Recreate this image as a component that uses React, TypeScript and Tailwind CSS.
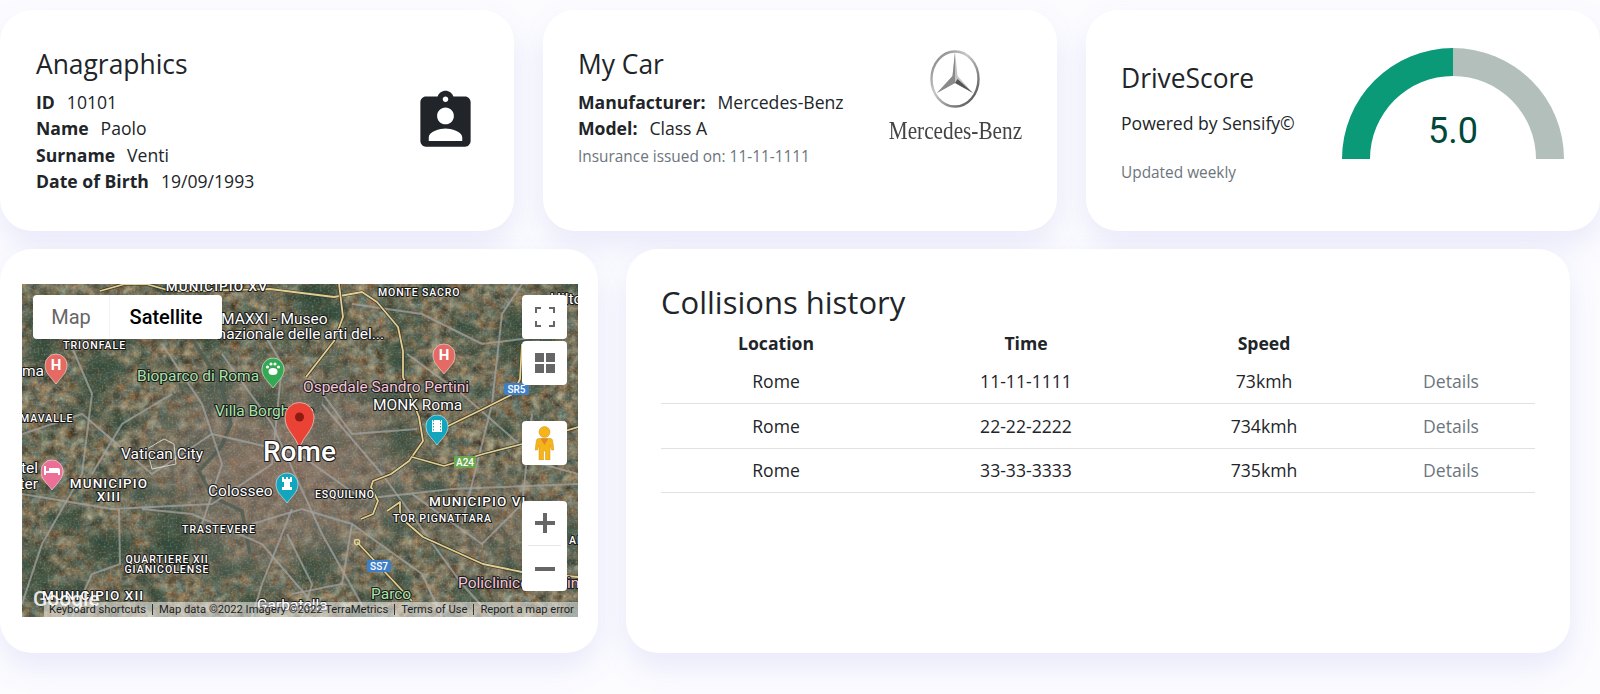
const LABEL_FONT = "Roboto, 'Liberation Sans', sans-serif";

const ROWS = [
  { location: 'Rome', time: '11-11-1111', speed: '73kmh' },
  { location: 'Rome', time: '22-22-2222', speed: '734kmh' },
  { location: 'Rome', time: '33-33-3333', speed: '735kmh' },
];

const YELLOW_ROADS = [
  'M78 7 L103 0 L124 0 L149 7 L177 7 L248 5 L312 13',
  'M312 13 L340 8 L355 18 L376 43 L381 67 L381 93 L397 133 L401 157 L387 177 L369 190 L351 197 L349 203 L356 217 L351 230 L339 235',
  'M284 93 L312 57 L321 33 L317 0',
  'M411 143 L426 142 L461 125 L491 110 L498 95 L500 60',
  'M390 173 L422 182 L461 170 L500 160 L556 143',
  'M365 227 L378 218 L378 233 L401 253 L461 280 L500 288 L556 293',
  'M335 258 L390 317',
];

const GRAY_ROADS = [
  'M0 150 L60 130 L130 190 L190 150 L277 170 L340 215 L430 205 L556 200',
  'M200 70 L250 140 L300 250 L345 330',
  'M385 70 L440 110 L520 180 L556 190',
  'M0 210 L90 225 L190 220 L250 180 L260 80 L230 30',
  'M40 40 L70 110 L60 190 L20 260 L0 320',
  'M97 225 L98 280 L70 290 L50 333',
  'M120 225 L170 230 L240 260 L300 330',
  'M270 225 L240 300 L230 333',
  'M440 240 L470 120 L480 30 L500 0',
  'M300 120 L360 190 L440 300 L470 333',
  'M140 60 L180 120 L200 180 L180 240',
  'M330 20 L400 30 L460 60 L540 50',
  'M390 210 L460 260 L500 220 L510 130',
  'M290 95 L330 150 L395 145',
  'M230 240 L280 225 L330 240 L320 300 L270 310',
  'M150 110 L100 140 L70 190',
  'M265 250 L290 300 L280 333',
  'M330 240 L400 290 L420 333',
];

function MapPin({ x, y, color, children }: { x: number; y: number; color: string; children?: React.ReactNode }) {
  return (
    <g transform={`translate(${x} ${y})`}>
      <path d="M0 10 C-6 2 -11 -1 -11 -9 A11 11 0 1 1 11 -9 C11 -1 6 2 0 10Z" fill={color} stroke="#fff" strokeWidth="0.5" transform="translate(0 9)" />
      {children}
    </g>
  );
}

function MapLabel({ x, y, size, fill = '#fff', weight = 400, spacing = 0, anchor = 'start', children }: {
  x: number;
  y: number;
  size: number;
  fill?: string;
  weight?: number;
  spacing?: number;
  anchor?: 'start' | 'middle' | 'end';
  children: React.ReactNode;
}) {
  return (
    <text
      x={x}
      y={y}
      fontSize={size}
      fill={fill}
      fontWeight={weight}
      letterSpacing={spacing}
      textAnchor={anchor}
      fontFamily={LABEL_FONT}
      stroke="#1c1c1c"
      strokeWidth="2.2"
      paintOrder="stroke"
      strokeLinejoin="round"
    >
      {children}
    </text>
  );
}

function Shield({ x, y, w, h, color, children }: { x: number; y: number; w: number; h: number; color: string; children: React.ReactNode }) {
  return (
    <g>
      <rect x={x} y={y} width={w} height={h} rx="2" fill={color} />
      <text x={x + w / 2} y={y + h - 2} fontSize="10" fontWeight={500} fill="#fff" textAnchor="middle" fontFamily={LABEL_FONT}>
        {children}
      </text>
    </g>
  );
}

function SatelliteMap() {
  return (
    <svg viewBox="0 0 556 333" className="absolute inset-0 h-full w-full">
      <defs>
        <filter id="ground" x="0" y="0" width="100%" height="100%" colorInterpolationFilters="sRGB">
          <feTurbulence type="fractalNoise" baseFrequency="0.11" numOctaves="5" seed="11" />
          <feColorMatrix values="0.55 0.2 0 0 0.08  0.35 0.4 0 0 0.06  0.2 0.45 0 0 0.02  0 0 0 0 1" />
        </filter>
        <filter id="forest" x="0" y="0" width="100%" height="100%" colorInterpolationFilters="sRGB">
          <feTurbulence type="fractalNoise" baseFrequency="0.028 0.04" numOctaves="5" seed="23" />
          <feColorMatrix values="0 0 0 0 0.2  0 0 0 0 0.3  0 0 0 0 0.24  3 2.2 0 0 -2.55" />
        </filter>
        <filter id="grain" x="0" y="0" width="100%" height="100%" colorInterpolationFilters="sRGB">
          <feTurbulence type="fractalNoise" baseFrequency="0.5" numOctaves="2" seed="8" />
          <feColorMatrix values="0 0 0 0 0.85  0 0 0 0 0.82  0 0 0 0 0.78  1.8 0 0 0 -0.85" />
        </filter>
        <filter id="soft">
          <feGaussianBlur stdDeviation="7" />
        </filter>
        <radialGradient id="urban" cx="50%" cy="50%" r="50%">
          <stop offset="0%" stopColor="#8f7466" stopOpacity="0.75" />
          <stop offset="55%" stopColor="#82746a" stopOpacity="0.5" />
          <stop offset="100%" stopColor="#7c766c" stopOpacity="0" />
        </radialGradient>
      </defs>
      <rect width="556" height="333" fill="#6e6a56" />
      <rect width="556" height="333" filter="url(#ground)" />
      <rect width="556" height="333" filter="url(#forest)" opacity="0.8" />
      <ellipse cx="260" cy="185" rx="170" ry="130" fill="url(#urban)" />
      <ellipse cx="470" cy="240" rx="90" ry="70" fill="url(#urban)" opacity="0.4" />

      {/* parks */}
      <g filter="url(#soft)" fill="#2c4436" opacity="0.7">
        <ellipse cx="295" cy="20" rx="22" ry="28" />
        <ellipse cx="72" cy="100" rx="14" ry="34" />
        <ellipse cx="245" cy="118" rx="18" ry="14" />
        <ellipse cx="150" cy="250" rx="22" ry="30" />
        <ellipse cx="85" cy="265" rx="26" ry="18" />
        <ellipse cx="285" cy="285" rx="14" ry="18" />
        <ellipse cx="380" cy="155" rx="16" ry="18" />
        <ellipse cx="22" cy="60" rx="16" ry="24" />
        <ellipse cx="500" cy="50" rx="26" ry="24" />
        <ellipse cx="15" cy="290" rx="16" ry="34" />
      </g>
      <rect width="556" height="333" filter="url(#grain)" opacity="0.4" />

      {/* river */}
      <path d="M167 50 L199 100 L209 140 L199 163 L177 187 L191 213 L220 227 L228 270" fill="none" stroke="#4c5c52" strokeWidth="3.5" opacity="0.8" />

      {GRAY_ROADS.map((d) => (
        <path key={d} d={d} fill="none" stroke="#a3a3a1" strokeWidth="2" opacity="0.75" />
      ))}
      {YELLOW_ROADS.map((d) => (
        <g key={d}>
          <path d={d} fill="none" stroke="#3f3a28" strokeWidth="3.2" strokeLinejoin="round" />
          <path d={d} fill="none" stroke="#e2cf93" strokeWidth="1.8" strokeLinejoin="round" />
        </g>
      ))}
      <circle cx="335" cy="258" r="2.5" fill="none" stroke="#e2cf93" strokeWidth="1.5" />
      <path d="M125 165 L142 155 L152 160 L154 180 L130 185Z" fill="none" stroke="#e8e8e0" strokeWidth="0.8" />

      <MapLabel x={195} y={7} size={13.5} weight={500} spacing={1.1} anchor="middle">MUNICIPIO XV</MapLabel>
      <MapLabel x={199} y={40} size={15.5}>MAXXI - Museo</MapLabel>
      <MapLabel x={362} y={55} size={15.5} anchor="end">nazionale delle arti del...</MapLabel>
      <MapLabel x={356} y={12} size={10.5} weight={500} spacing={0.9}>MONTE SACRO</MapLabel>
      <MapLabel x={41} y={65} size={10.5} weight={500} spacing={1}>TRIONFALE</MapLabel>
      <MapLabel x={0} y={92} size={15.5}>ma</MapLabel>
      <MapLabel x={115} y={97} size={15.5} fill="#a9e6ac">Bioparco di Roma</MapLabel>
      <MapLabel x={-2} y={138} size={10.5} weight={500} spacing={1}>MAVALLE</MapLabel>
      <MapLabel x={193} y={132} size={15.5} fill="#a9e6ac">Villa Borghese</MapLabel>
      <MapLabel x={281} y={108} size={15.5} fill="#f5c6da">Ospedale Sandro Pertini</MapLabel>
      <MapLabel x={351} y={126} size={15.5}>MONK Roma</MapLabel>
      <MapLabel x={99} y={175} size={15.5}>Vatican City</MapLabel>
      <MapLabel x={16} y={189} size={15.5} anchor="end">Hotel</MapLabel>
      <MapLabel x={16} y={205} size={15.5} anchor="end">Porter</MapLabel>
      <MapLabel x={87} y={204} size={13.5} weight={500} spacing={1.1} anchor="middle">MUNICIPIO</MapLabel>
      <MapLabel x={87} y={217} size={13.5} weight={500} spacing={1.1} anchor="middle">XIII</MapLabel>
      <MapLabel x={186} y={212} size={15.5}>Colosseo</MapLabel>
      <MapLabel x={160} y={249} size={10.5} weight={500} spacing={1}>TRASTEVERE</MapLabel>
      <MapLabel x={145} y={279} size={10.5} weight={500} spacing={1} anchor="middle">QUARTIERE XII</MapLabel>
      <MapLabel x={145} y={289} size={10.5} weight={500} spacing={1} anchor="middle">GIANICOLENSE</MapLabel>
      <MapLabel x={20} y={316} size={13.5} weight={500} spacing={1.1}>MUNICIPIO XII</MapLabel>
      <MapLabel x={293} y={214} size={10.5} weight={500} spacing={0.8}>ESQUILINO</MapLabel>
      <MapLabel x={407} y={222} size={13.5} weight={500} spacing={1.1}>MUNICIPIO VI</MapLabel>
      <MapLabel x={371} y={238} size={10.5} weight={500} spacing={0.9}>TOR PIGNATTARA</MapLabel>
      <MapLabel x={349} y={315} size={15.5} fill="#a9e6ac">Parco</MapLabel>
      <MapLabel x={436} y={304} size={15.5} fill="#f5c6da">Policlinico Casilino</MapLabel>
      <MapLabel x={547} y={260} size={10.5} weight={500} spacing={1}>AL</MapLabel>
      <MapLabel x={528} y={20} size={15.5}>Hilton</MapLabel>
      <MapLabel x={235} y={326} size={15.5}>Garbatella</MapLabel>

      <Shield x={482} y={99} w={25} h={12} color="#3f7fc8">SR5</Shield>
      <Shield x={432} y={172} w={22} h={12} color="#6aa84f">A24</Shield>
      <Shield x={345} y={276} w={24} h={12} color="#3f7fc8">SS7</Shield>

      <MapPin x={34} y={81} color="#e46a63">
        <text y="5" textAnchor="middle" fontSize="15" fontWeight={700} fill="#fff" fontFamily={LABEL_FONT}>H</text>
      </MapPin>
      <MapPin x={422} y={71} color="#e46a63">
        <text y="5" textAnchor="middle" fontSize="15" fontWeight={700} fill="#fff" fontFamily={LABEL_FONT}>H</text>
      </MapPin>
      <MapPin x={251} y={85} color="#34a853">
        <ellipse cx="0" cy="2.5" rx="4.5" ry="3.5" fill="#fff" />
        <circle cx="-5.5" cy="-2" r="1.6" fill="#fff" />
        <circle cx="-2" cy="-5" r="1.6" fill="#fff" />
        <circle cx="2" cy="-5" r="1.6" fill="#fff" />
        <circle cx="5.5" cy="-2" r="1.6" fill="#fff" />
      </MapPin>
      <MapPin x={415} y={142} color="#12a5bd">
        <rect x="-5" y="-6" width="10" height="12" fill="#fff" />
        <path d="M-3.5 -6V6M3.5 -6V6" stroke="#12a5bd" strokeWidth="1" strokeDasharray="1.5 1.5" />
      </MapPin>
      <MapPin x={30} y={187} color="#ec6f97">
        <path d="M-8 4V-5H-6V0H-3V-3H6A2 2 0 0 1 8 -1V4H6V2H-6V4Z" fill="#fff" />
      </MapPin>
      <MapPin x={265} y={200} color="#12a5bd">
        <path d="M-5 -7H-3V-5H-1V-7H1V-5H3V-7H5V-2H3V3H5V6H-5V3H-3V-2H-5Z" fill="#fff" />
      </MapPin>

      <path d="M277.5 165 C274 151 263 147 263 133 A14.5 14.5 0 1 1 292 133 C292 147 281 151 277.5 165Z" fill="#ea4335" stroke="#fff" strokeWidth="0.5" />
      <circle cx="277.5" cy="133" r="4.5" fill="#8f1a12" />
      <MapLabel x={241} y={177} size={28} weight={500}>Rome</MapLabel>
      <text x={11} y={322} fontSize={21} fontWeight={500} fill="#fff" fillOpacity="0.85" fontFamily={LABEL_FONT}>Google</text>
    </svg>
  );
}

function MapEmbed() {
  return (
    <div className="relative h-[333px] w-[556px] overflow-hidden bg-[#6e6a56] font-['Roboto',sans-serif]">
      <SatelliteMap />

      {/* map type switch */}
      <div className="absolute left-[11px] top-[11px] flex h-[44px] w-[189px] rounded-sm bg-white text-[20px] shadow-sm">
        <div className="flex w-[77px] items-center justify-center border-r border-gray-100 text-[#666]">Map</div>
        <div className="flex flex-1 items-center justify-center font-medium text-black">Satellite</div>
      </div>

      {/* right controls */}
      <div className="absolute right-[11px] top-[11px] flex w-[45px] flex-col">
        <div className="flex h-[44px] items-center justify-center rounded-sm bg-white">
          <svg viewBox="0 0 20 20" className="h-[20px] w-[20px]" fill="none" stroke="#666" strokeWidth="2">
            <path d="M1 6V1H6M14 1H19V6M19 14V19H14M6 19H1V14" />
          </svg>
        </div>
        <div className="mt-[2px] flex h-[44px] items-center justify-center rounded-sm bg-white">
          <svg viewBox="0 0 20 20" className="h-[20px] w-[20px]" fill="#666">
            <path d="M0 0H9V9H0ZM11 0H20V9H11ZM0 11H9V20H0ZM11 11H20V20H11Z" />
          </svg>
        </div>
        <div className="mt-[36px] flex h-[44px] items-center justify-center rounded-sm bg-white">
          <svg viewBox="0 0 19 34" className="h-[34px] w-[19px]">
            <circle cx="9.5" cy="6" r="5.5" fill="#f5b51a" stroke="#d0951a" strokeWidth="0.5" />
            <path d="M3.5 12.5H15.5Q17 12.5 17.5 14L19 24H16.5L15 19V34H10.5V25H8.5V34H4V19L2.5 24H0L1.5 14Q2 12.5 3.5 12.5Z" fill="#f5b51a" stroke="#d0951a" strokeWidth="0.5" />
            <path d="M5.5 12.5L9.5 19L13.5 12.5Z" fill="#e0862a" />
          </svg>
        </div>
        <div className="mt-[36px] flex h-[90px] flex-col items-center rounded-sm bg-white">
          <div className="flex h-[44px] items-center justify-center">
            <svg viewBox="0 0 20 20" className="h-[20px] w-[20px]" fill="#666">
              <path d="M8 0H12V8H20V12H12V20H8V12H0V8H8Z" />
            </svg>
          </div>
          <div className="h-px w-[33px] bg-gray-200" />
          <div className="flex h-[45px] items-center justify-center">
            <svg viewBox="0 0 20 20" className="h-[20px] w-[20px]" fill="#666">
              <path d="M0 8H20V12H0Z" />
            </svg>
          </div>
        </div>
      </div>

      {/* attribution */}
      <div className="absolute bottom-0 left-[22px] right-0 flex h-[15px] items-center whitespace-nowrap bg-white/50 text-[11.2px] leading-none text-[#222]">
        <span className="pl-[5px] pr-[6px]">Keyboard shortcuts</span>
        <span className="border-l border-[#333] px-[6px]">Map data ©2022 Imagery ©2022 TerraMetrics</span>
        <span className="border-l border-[#333] px-[6px]">Terms of Use</span>
        <span className="border-l border-[#333] pl-[6px]">Report a map error</span>
      </div>
    </div>
  );
}

function MercedesLogo() {
  return (
    <div className="flex flex-col items-center">
      <svg viewBox="0 0 52 60" className="h-[60px] w-[52px]">
        <defs>
          <linearGradient id="chrome" x1="0" y1="0" x2="1" y2="1">
            <stop offset="0%" stopColor="#777" />
            <stop offset="40%" stopColor="#c9c9c9" />
            <stop offset="100%" stopColor="#444" />
          </linearGradient>
        </defs>
        <ellipse cx="26" cy="30" rx="23.5" ry="27.5" fill="none" stroke="url(#chrome)" strokeWidth="2.4" />
        <path d="M26 3 L28.5 27 L44 44 L26 34 L8 44 L23.5 27Z" fill="#c4c4c4" />
        <path d="M26 3 L26 34 L8 44 L23.5 27Z" fill="#8a8a8a" />
        <path d="M26 34 L44 44 L28.5 30Z" fill="#555" />
      </svg>
      <span className="mt-[8px] origin-top scale-x-[0.85] whitespace-nowrap font-['Liberation_Serif',serif] text-[25px] leading-[28px] text-[#444]">
        Mercedes-Benz
      </span>
    </div>
  );
}

function Gauge() {
  return (
    <svg viewBox="0 0 222 111" className="h-[111px] w-[222px]">
      <path d="M111 0 A111 111 0 0 1 222 111 H194 A83 83 0 0 0 111 28Z" fill="#b2bfbb" />
      <path d="M0 111 A111 111 0 0 1 111 0 V28 A83 83 0 0 0 28 111Z" fill="#0a9a78" />
      <text x="111" y="95" textAnchor="middle" fontSize="36" fill="#00493a" fontFamily={LABEL_FONT}>5.0</text>
    </svg>
  );
}

export default function App() {
  return (
    <div className="h-[694px] overflow-hidden bg-[#fcfcff] pt-[10px] font-['Open_Sans',sans-serif] text-[17.6px] text-[#212529]">
      {/* top cards */}
      <div className="grid grid-cols-3 gap-x-[29px]">
        <div className="flex h-[221px] justify-between rounded-[32px] bg-white pl-[36px] pr-[35px] pt-[34px] shadow-[0_14px_32px_rgba(90,90,210,0.12)]">
          <div>
            <h3 className="text-[26.4px] leading-[40px]">Anagraphics</h3>
            <div className="mt-[5px] leading-[26.4px]">
              <p><b className="mr-[12px]">ID</b>10101</p>
              <p><b className="mr-[12px]">Name</b>Paolo</p>
              <p><b className="mr-[12px]">Surname</b>Venti</p>
              <p><b className="mr-[12px]">Date of Birth</b>19/09/1993</p>
            </div>
          </div>
          <svg viewBox="0 0 24 24" className="mt-[44px] h-[67px] w-[67px]" fill="#212529">
            <path d="M19 3h-4.18C14.4 1.84 13.3 1 12 1c-1.3 0-2.4.84-2.82 2H5c-1.1 0-2 .9-2 2v14c0 1.1.9 2 2 2h14c1.1 0 2-.9 2-2V5c0-1.1-.9-2-2-2zm-7 0c.55 0 1 .45 1 1s-.45 1-1 1-1-.45-1-1 .45-1 1-1zm0 4c1.66 0 3 1.34 3 3s-1.34 3-3 3-3-1.34-3-3 1.34-3 3-3zm6 12H6v-1.4c0-2 4-3.1 6-3.1s6 1.1 6 3.1V19z" />
          </svg>
        </div>

        <div className="flex h-[221px] justify-between rounded-[32px] bg-white pl-[35px] pr-[35px] pt-[34px] shadow-[0_14px_32px_rgba(90,90,210,0.12)]">
          <div>
            <h3 className="text-[26.4px] leading-[40px]">My Car</h3>
            <div className="mt-[5px] leading-[26.4px]">
              <p><b className="mr-[12px]">Manufacturer:</b>Mercedes-Benz</p>
              <p><b className="mr-[12px]">Model:</b>Class A</p>
              <p className="mt-[2px] text-[15.4px] text-[#6c757d]">Insurance issued on: 11-11-1111</p>
            </div>
          </div>
          <div className="w-[134px] pt-[5px]">
            <MercedesLogo />
          </div>
        </div>

        <div className="flex h-[221px] justify-between rounded-[32px] bg-white pl-[35px] pr-[36px] shadow-[0_14px_32px_rgba(90,90,210,0.12)]">
          <div className="pt-[48px]">
            <h3 className="text-[26.4px] leading-[40px]">DriveScore</h3>
            <p className="mt-[13px] leading-[24px]">Powered by Sensify©</p>
            <p className="mt-[26px] text-[15.4px] leading-[24px] text-[#6c757d]">Updated weekly</p>
          </div>
          <div className="pt-[38px]">
            <Gauge />
          </div>
        </div>
      </div>

      {/* bottom cards */}
      <div className="mt-[18px] flex gap-x-[28px] pr-[30px]">
        <div className="h-[404px] w-[598px] shrink-0 rounded-[32px] bg-white pl-[22px] pt-[35px] shadow-[0_14px_32px_rgba(90,90,210,0.12)]">
          <MapEmbed />
        </div>

        <div className="h-[404px] flex-1 rounded-[32px] bg-white px-[35px] pt-[28px] shadow-[0_14px_32px_rgba(90,90,210,0.12)]">
          <h2 className="mb-px text-[31px] leading-[50px]">Collisions history</h2>
          <table className="w-[874px] table-fixed border-collapse text-center">
            <thead>
              <tr className="h-[31px]">
                <th className="w-[230px] font-bold">Location</th>
                <th className="w-[270px] font-bold">Time</th>
                <th className="w-[206px] font-bold">Speed</th>
                <th className="w-[168px]" />
              </tr>
            </thead>
            <tbody>
              {ROWS.map((row) => (
                <tr key={row.time} className="h-[44.5px] border-b border-[#dee2e6]">
                  <td>{row.location}</td>
                  <td>{row.time}</td>
                  <td>{row.speed}</td>
                  <td className="text-[#6c757d]">Details</td>
                </tr>
              ))}
            </tbody>
          </table>
        </div>
      </div>
    </div>
  );
}
